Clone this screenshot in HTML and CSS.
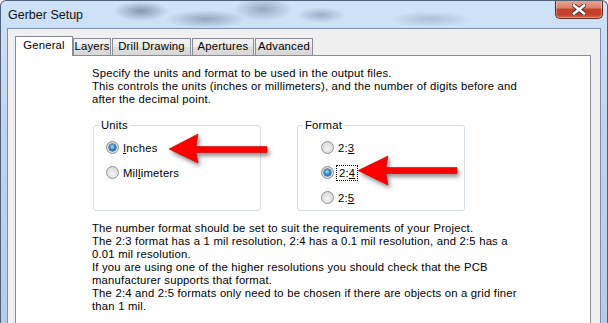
FILE: index.html
```html
<!DOCTYPE html>
<html lang="en">
<head>
  <meta charset="UTF-8">
  <title>Gerber Setup</title>
  <link rel="stylesheet" href="styles.css">
</head>
<body>

  <div class="window">
    <div class="titlebar">
      <span class="title">Gerber Setup</span>
      <span class="close">
        <svg width="14" height="11" viewBox="0 0 14 11">
          <path d="M2 1.5 L12 9.5 M12 1.5 L2 9.5" stroke="#4a2a24" stroke-width="4.4" stroke-linecap="square"/>
          <path d="M2 1.5 L12 9.5 M12 1.5 L2 9.5" stroke="#fff" stroke-width="2.6" stroke-linecap="square"/>
        </svg>
      </span>
    </div>

    <div class="client">
      <div class="tabs">
        <div class="tab active tab-general">General</div>
        <div class="tab tab-layers">Layers</div>
        <div class="tab tab-drill">Drill Drawing</div>
        <div class="tab tab-apertures">Apertures</div>
        <div class="tab tab-advanced">Advanced</div>
      </div>

      <div class="pane">
        <p class="intro">
          Specify the units and format to be used in the output files.<br>
          This controls the units (inches or millimeters), and the number of digits before and<br>
          after the decimal point.
        </p>

        <div class="groups">
          <fieldset class="group units">
            <legend>Units</legend>
            <div class="option"><span class="radio checked"></span><span><u>I</u>nches</span></div>
            <div class="option"><span class="radio"></span><span>Mil<u>l</u>imeters</span></div>
          </fieldset>

          <fieldset class="group format">
            <legend>Format</legend>
            <div class="option"><span class="radio"></span><span>2:<u>3</u></span></div>
            <div class="option"><span class="radio checked"></span><span class="focus">2:<u>4</u></span></div>
            <div class="option"><span class="radio"></span><span>2:<u>5</u></span></div>
          </fieldset>
        </div>

        <p class="notes">
          The number format should be set to suit the requirements of your Project.<br>
          The 2:3 format has a 1 mil resolution, 2:4 has a 0.1 mil resolution, and 2:5 has a<br>
          0.01 mil resolution.<br>
          If you are using one of the higher resolutions you should check that the PCB<br>
          manufacturer supports that format.<br>
          The 2:4 and 2:5 formats only need to be chosen if there are objects on a grid finer<br>
          than 1 mil.
        </p>
      </div>
    </div>

    <!-- setas vermelhas por cima do dialogo -->
    <svg class="arrows" width="608" height="323">
      <polygon points="169,149 198,134 196,146.5 267,146.5 267,152.5 196,152.5 198,163" />
      <polygon points="358,170.5 388,156 386,167.5 457,167.5 457,173.5 386,173.5 388,185" />
    </svg>
  </div>

</body>
</html>
```

FILE: styles.css
```css
body {
  margin: 0;
  font-family: "Liberation Sans", Arial, sans-serif;
  font-size: 11.3px;
  letter-spacing: 0.2px;
  color: #000;
  background: #fff;
}

.window {
  position: relative;
  width: 608px;
  height: 323px;
  box-sizing: border-box;
  overflow: hidden;
  border: 1px solid #4f6277;
  border-bottom: none;
  border-radius: 6px 6px 0 0;
  background:
    radial-gradient(ellipse 28px 10px at 140px 10px, rgba(40, 60, 90, .45), transparent),
    radial-gradient(ellipse 40px 9px at 205px 18px, rgba(40, 60, 90, .35), transparent),
    radial-gradient(ellipse 30px 12px at 262px 8px, rgba(40, 60, 90, .35), transparent),
    radial-gradient(ellipse 24px 8px at 320px 14px, rgba(40, 60, 90, .3), transparent),
    radial-gradient(ellipse 40px 8px at 430px 18px, rgba(40, 60, 90, .2), transparent),
    linear-gradient(to bottom, #cfe3f7, #bcd5ee 40%, #b3cde9);
}

.titlebar {
  display: flex;
  align-items: flex-start;
  justify-content: space-between;
  height: 27px;
}

.title {
  padding: 7px 0 0 7px;
  font-size: 12.5px;
  letter-spacing: 0;
  color: #111;
}

.close {
  display: flex;
  align-items: center;
  justify-content: center;
  width: 48px;
  height: 19px;
  margin: -1px 4px 0 0;
  box-sizing: border-box;
  border: 1px solid #5a2a22;
  border-top: none;
  border-radius: 0 0 5px 5px;
  background: linear-gradient(to bottom, #e9a797, #dc7f69 45%, #c7402a 50%, #c4402a 80%, #d5654b);
  box-shadow: inset 0 0 0 1px rgba(255, 255, 255, .35);
}

.client {
  height: 300px;
  margin: 0 6px;
  border: 1px solid #7d8da2;
  border-bottom: none;
  background: #f0f0f0;
}

.tabs {
  display: flex;
  align-items: flex-end;
  gap: 1px;
  padding: 7px 0 0 7px;
}

.tab {
  height: 16px;
  box-sizing: content-box;
  text-align: center;
  line-height: 15px;
  border: 1px solid #898c95;
  border-bottom: none;
  background: linear-gradient(to bottom, #f3f3f3, #ebebeb 50%, #dedede 51%, #d8d8d8);
}

.tab.active {
  position: relative;
  z-index: 1;
  height: 19px;
  margin-right: -1px;
  margin-bottom: -1px;
  line-height: 17px;
  background: #fff;
}

.tab-general { width: 56px; }
.tab-layers { width: 36px; }
.tab-drill { width: 77px; }
.tab-apertures { width: 60px; }
.tab-advanced { width: 56px; }

.pane {
  height: 280px;
  margin: 0 9px 0 7px;
  padding: 11px 0 0 76px;
  border: 1px solid #898c95;
  background: #fff;
}

.intro,
.notes {
  margin: 0;
  line-height: 13px;
  white-space: nowrap;
}

.groups {
  display: flex;
  gap: 36px;
  margin: 13px 0 0 1px;
}

.group {
  width: 168px;
  height: 92px;
  box-sizing: border-box;
  margin: 0;
  padding: 3px 0 0 0;
  border: 1px solid #d5dfe5;
  border-radius: 3px;
  min-inline-size: 0;
}

.group legend {
  margin-left: 5px;
  padding: 0 2px;
  line-height: 13px;
}

.option {
  display: flex;
  align-items: center;
  height: 25px;
  padding-left: 12px;
}

.format .option {
  padding-left: 23px;
}

.radio {
  position: relative;
  width: 13px;
  height: 13px;
  margin-right: 4px;
  box-sizing: border-box;
  border: 1px solid #8e8f8f;
  border-radius: 50%;
  background: radial-gradient(circle at 50% 60%, #f4f4f4, #dcdcdc 70%, #cfcfcf);
}

.radio.checked::after {
  content: "";
  position: absolute;
  left: 2px;
  top: 2px;
  width: 7px;
  height: 7px;
  border-radius: 50%;
  background: radial-gradient(circle at 45% 40%, #a9dcf9, #3b8fcf 45%, #0e4e86 85%);
  box-shadow: 0 0 0 0.5px #14426c;
}

.focus {
  padding: 0 1px;
  outline: 1px dotted #000;
  outline-offset: 1px;
}

.notes {
  margin-top: 11px;
}

.arrows {
  position: absolute;
  left: -1px;
  top: -1px;
  pointer-events: none;
}

.arrows polygon {
  fill: #ff0000;
  stroke: #c40000;
  stroke-width: 0.6;
  filter: drop-shadow(2px 3px 2px rgba(0, 0, 0, .45));
}
```
